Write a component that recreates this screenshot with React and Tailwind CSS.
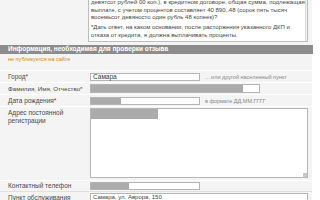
import React from "react";

const F = { fontFamily: '"Liberation Sans", Arial, sans-serif' };

export default function App() {
  return (
    <div className="w-[320px] h-[200px] overflow-hidden bg-white relative" style={F}>
      <div className="w-[312px] h-[200px] bg-[#f4f4f4]">
        {/* top textarea */}
        <div className="flex h-[45px]">
          <div className="w-[88px] shrink-0" />
          <div className="w-[220px] h-[42px] bg-white border border-[#bdbdbd] border-t-0 flex overflow-hidden">
            <div className="flex-1 pl-[2px] pt-0 text-[6px] leading-[7.5px] text-[#444] -mt-[1px]">
              <div className="whitespace-nowrap">девятсот рублей 00 коп.), в кредитном договоре, общая сумма, подлежащая</div>
              <div className="whitespace-nowrap">выплате, с учетом процентов составляет 40 890,.48 (сорок пять тысяч</div>
              <div className="whitespace-nowrap">восемьсот девяносто один рубль 48 копеек)?</div>
              <div className="h-[2.5px]" />
              <div className="whitespace-nowrap">*Дать ответ, на каком основании, после расторжения указанного ДКП и</div>
              <div className="whitespace-nowrap">отказа от кредита, я должна выплачивать проценты.</div>
            </div>
            <div className="w-[8px] shrink-0 bg-[#f0f0f0] border-l border-[#dcdcdc] flex flex-col">
              <div className="h-[14px] mx-[1px] bg-[#d6d6d6] rounded-[1px]" />
              <div className="flex justify-center pt-[10px]">
                <svg width="5" height="3" viewBox="0 0 5 3"><path d="M0 0h5L2.5 3z" fill="#555" /></svg>
              </div>
            </div>
          </div>
        </div>
        {/* header bar */}
        <div className="h-[9px] bg-[#8c8c8c] w-[313px] flex items-center pl-[8px] text-[6.5px] font-bold text-white leading-none">
          Информация, необходимая для проверки отзыва
        </div>
        <div className="h-[16px] pl-[8px] pt-[3px] text-[5.5px] text-[#d48a00] leading-none">
          не публикуется на сайте
        </div>
        {/* rows */}
        <div className="flex flex-col text-[6.5px] text-[#4a4a4a] leading-[8px]">
          <div className="flex items-center h-[12px] border-t border-white">
            <div className="w-[90px] pl-[8px] shrink-0">Город*</div>
            <div className="w-[110px] h-[8px] bg-white border border-[#b5b5b5] text-[6.5px] leading-[6px] pl-[2px] text-[#333]">Самара</div>
            <div className="pl-[5px] text-[5.5px] text-[#888]">... или другой населенный пункт</div>
          </div>
          <div className="flex items-center h-[12px] border-t border-white">
            <div className="w-[90px] pl-[8px] shrink-0 whitespace-nowrap text-[6.2px]">Фамилия, Имя, Отчество*</div>
            <div className="w-[170px] h-[9px] bg-white border border-[#b5b5b5] flex">
              <div className="w-[152px] bg-[#ababab]" />
            </div>
          </div>
          <div className="flex items-center h-[12px] border-t border-white">
            <div className="w-[90px] pl-[8px] shrink-0">Дата рождения*</div>
            <div className="w-[110px] h-[8px] bg-white border border-[#b5b5b5] flex">
              <div className="w-[30px] bg-[#ababab]" />
            </div>
            <div className="pl-[5px] text-[5.5px] text-[#888]">в формате ДД.ММ.ГГГГ</div>
          </div>
          <div className="flex h-[74px] border-t border-white pt-[1px]">
            <div className="w-[90px] pl-[8px] shrink-0 pt-[1px]">Адрес постоянной<br />регистрации</div>
            <div className="w-[218px] h-[70px] bg-white border border-[#b5b5b5] relative">
              <div className="w-[67px] h-[10px] bg-[#ababab]" />
              <div className="absolute right-0 bottom-0 w-[4px] h-[4px] bg-[#c8c8c8]" />
            </div>
          </div>
          <div className="flex items-center h-[11px] border-t border-white">
            <div className="w-[90px] pl-[8px] shrink-0">Контактный телефон</div>
            <div className="w-[110px] h-[8px] bg-white border border-[#b5b5b5] flex">
              <div className="w-[38px] bg-[#ababab]" />
            </div>
          </div>
          <div className="flex items-end h-[10px] border-t border-[#e0e0e0]">
            <div className="w-[90px] pl-[8px] shrink-0 leading-[7px]">Пункт обслуживания</div>
            <div className="w-[218px] h-[8px] bg-white border border-[#b5b5b5] border-b-0 text-[6px] leading-[7px] pl-[2px] text-[#444]">Самара, ул. Аврора, 150</div>
          </div>
        </div>
      </div>
    </div>
  );
}
